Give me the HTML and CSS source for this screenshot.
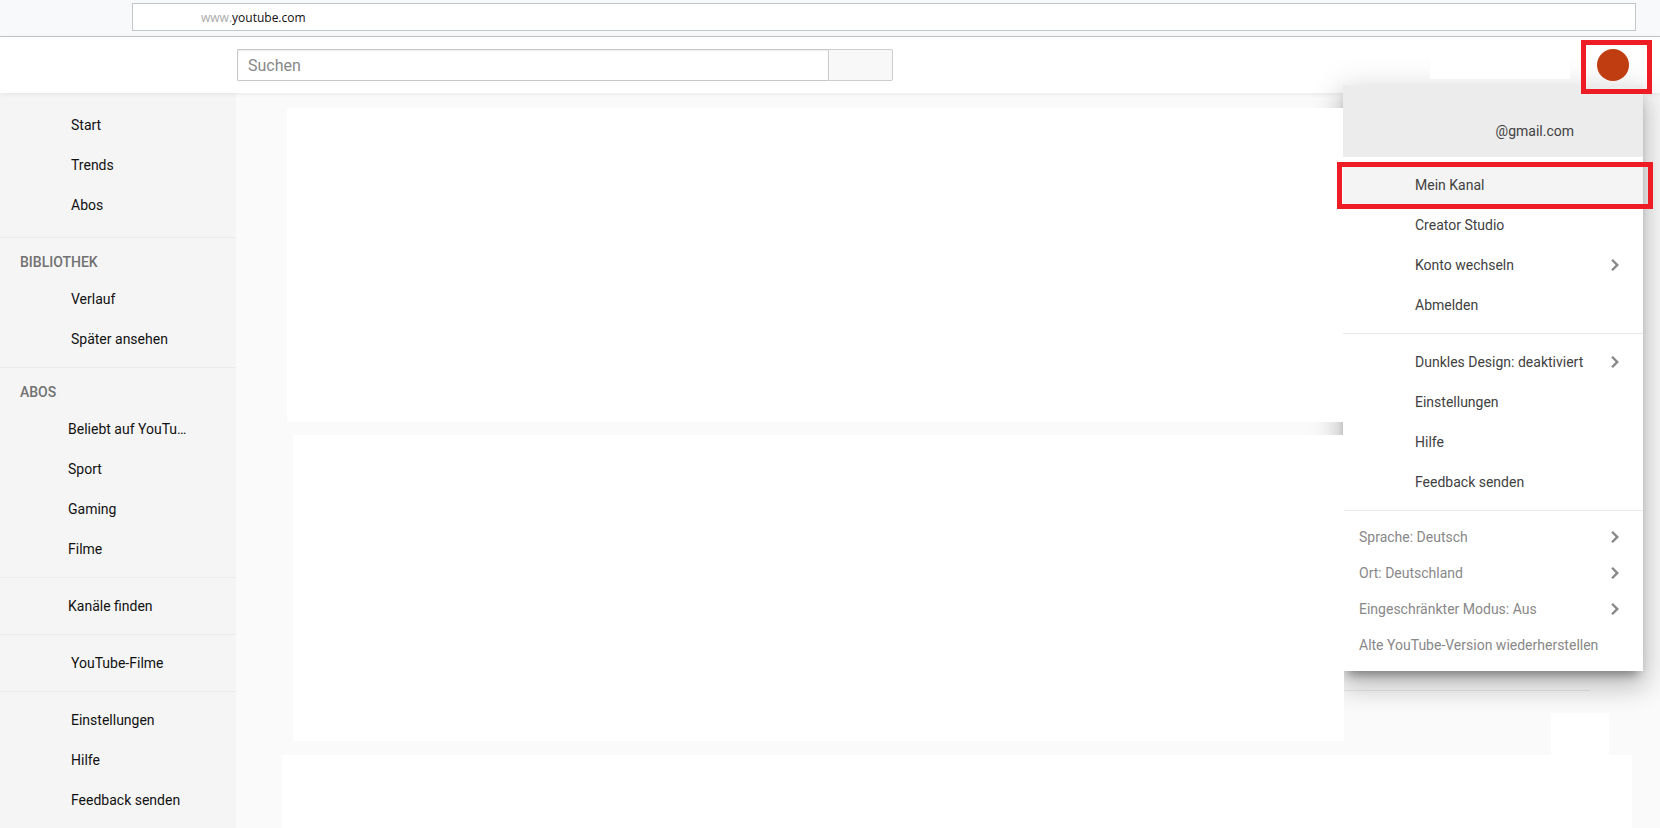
FILE: index.html
```html
<!DOCTYPE html>
<html lang="de">
<head>
  <meta charset="UTF-8">
  <meta name="viewport" content="width=device-width, initial-scale=1.0">
  <title>YouTube</title>
  <link rel="stylesheet" href="styles.css">
</head>
<body>

<div class="browser-bar">
  <div class="address">
    <label for="url">www.</label>
    <input type="text" id="url" value="youtube.com">
  </div>
</div>

<header class="header">
  <form class="search">
    <input type="text" placeholder="Suchen" aria-label="Suchen">
    <button type="button" aria-label="Suchen"></button>
  </form>
  <div class="header-blank"></div>
  <button class="avatar" aria-label="Konto"></button>

  <div class="menu">
    <div class="menu-head">@gmail.com</div>
    <div class="menu-group">
      <a href="#" class="active">Mein Kanal</a>
      <a href="#">Creator Studio</a>
      <a href="#">Konto wechseln
        <svg width="24" height="24" viewBox="0 0 24 24"><path d="M8.2 16.4 12.6 12 8.2 7.6 9.9 5.9 16 12l-6.1 6.1z"/></svg>
      </a>
      <a href="#">Abmelden</a>
    </div>
    <div class="menu-group">
      <a href="#">Dunkles Design: deaktiviert
        <svg width="24" height="24" viewBox="0 0 24 24"><path d="M8.2 16.4 12.6 12 8.2 7.6 9.9 5.9 16 12l-6.1 6.1z"/></svg>
      </a>
      <a href="#">Einstellungen</a>
      <a href="#">Hilfe</a>
      <a href="#">Feedback senden</a>
    </div>
    <div class="menu-group small">
      <a href="#">Sprache: Deutsch
        <svg width="24" height="24" viewBox="0 0 24 24"><path d="M8.2 16.4 12.6 12 8.2 7.6 9.9 5.9 16 12l-6.1 6.1z"/></svg>
      </a>
      <a href="#">Ort: Deutschland
        <svg width="24" height="24" viewBox="0 0 24 24"><path d="M8.2 16.4 12.6 12 8.2 7.6 9.9 5.9 16 12l-6.1 6.1z"/></svg>
      </a>
      <a href="#">Eingeschränkter Modus: Aus
        <svg width="24" height="24" viewBox="0 0 24 24"><path d="M8.2 16.4 12.6 12 8.2 7.6 9.9 5.9 16 12l-6.1 6.1z"/></svg>
      </a>
      <a href="#">Alte YouTube-Version wiederherstellen</a>
    </div>
  </div>
</header>

<div class="page">
  <nav class="sidebar">
    <div class="section first">
      <a href="#">Start</a>
      <a href="#">Trends</a>
      <a href="#">Abos</a>
    </div>
    <div class="section">
      <h3>BIBLIOTHEK</h3>
      <a href="#">Verlauf</a>
      <a href="#">Später ansehen</a>
    </div>
    <div class="section channels">
      <h3>ABOS</h3>
      <a href="#">Beliebt auf YouTube</a>
      <a href="#">Sport</a>
      <a href="#">Gaming</a>
      <a href="#">Filme</a>
    </div>
    <div class="section channels">
      <a href="#">Kanäle finden</a>
    </div>
    <div class="section">
      <a href="#">YouTube-Filme</a>
    </div>
    <div class="section">
      <a href="#">Einstellungen</a>
      <a href="#">Hilfe</a>
      <a href="#">Feedback senden</a>
    </div>
  </nav>

  <main class="content">
    <div class="panel panel-top"></div>
    <div class="row">
      <div class="panel"></div>
      <div class="line"></div>
    </div>
    <div class="panel panel-bottom"></div>
  </main>
</div>

</body>
</html>
```
FILE: styles.css
```css
* {
  box-sizing: border-box;
}

body {
  margin: 0;
  min-height: 100vh;
  display: flex;
  flex-direction: column;
  background-color: #fafafa;
  font-family: Roboto, sans-serif;
  font-size: 14px;
  color: #111;
  overflow-x: hidden;
}

a {
  color: inherit;
  text-decoration: none;
}

/* browser bar */
.browser-bar {
  height: 37px;
  padding: 3px 24px 0 132px;
  background-color: #f7f9fb;
  border-bottom: 1px solid #c2c6c9;
}

.address {
  display: flex;
  align-items: center;
  height: 28px;
  padding-left: 68px;
  background-color: #fff;
  border: 1px solid #c2c8ca;
  font-family: "Open Sans", sans-serif;
  font-size: 12px;
}

.address label {
  color: #aaa;
}

.address input {
  flex: 1;
  padding: 0;
  border: none;
  outline: none;
  font: inherit;
  color: #111;
}

/* header */
.header {
  position: relative;
  display: flex;
  align-items: flex-start;
  height: 56px;
  padding: 0 31px 0 237px;
  background-color: #fff;
  box-shadow: 0 1px 5px rgba(0, 0, 0, 0.08);
}

.search {
  display: flex;
  flex: 0 1 656px;
  height: 32px;
  margin-top: 12px;
}

.search input {
  flex: 1;
  min-width: 0;
  padding: 0 10px;
  border: 1px solid #c6c6c6;
  border-right: none;
  border-radius: 2px 0 0 2px;
  box-shadow: inset 0 1px 2px #eee;
  font-family: inherit;
  font-size: 16px;
  outline: none;
}

.search input::placeholder {
  color: #888;
}

.search button {
  width: 65px;
  border: 1px solid #ccc;
  border-radius: 0 2px 2px 0;
  background-color: #f8f8f8;
}

/* keeps the menu shadow off the icon area */
.header-blank {
  position: relative;
  z-index: 1;
  width: 140px;
  height: 42px;
  margin: 0 27px 0 auto;
  background-color: #fff;
}

.avatar {
  position: relative;
  z-index: 3;
  width: 32px;
  height: 32px;
  margin-top: 12px;
  padding: 0;
  border: none;
  border-radius: 50%;
  background-color: #bf3d11;
}

.avatar::after {
  content: "";
  position: absolute;
  inset: -9px -23px -13px -16px;
  border: 5px solid #ee1c25;
}

/* account menu */
.menu {
  position: absolute;
  top: 48px;
  right: 17px;
  width: 300px;
  background-color: #fff;
  color: #414141;
  box-shadow: 0 16px 24px 2px rgba(0, 0, 0, 0.14),
              0 6px 30px 5px rgba(0, 0, 0, 0.12),
              0 8px 10px -5px rgba(0, 0, 0, 0.4);
}

.menu-head {
  height: 72px;
  padding: 36px 69px 0 0;
  background-color: #ececec;
  line-height: 20px;
  text-align: right;
}

.menu-group {
  padding: 8px 0;
}

.menu-group + .menu-group {
  border-top: 1px solid #e8e8e8;
}

.menu-group a {
  position: relative;
  display: flex;
  align-items: center;
  justify-content: space-between;
  height: 40px;
  padding: 0 16px 0 72px;
}

.menu-group svg {
  fill: #888;
}

.menu-group .active {
  background-color: #f4f4f4;
}

.menu-group .active::after {
  content: "";
  position: absolute;
  z-index: 3;
  inset: -3px -10px -4px -6px;
  border: 5px solid #ee1c25;
}

.menu-group.small a {
  height: 36px;
  padding-left: 16px;
  color: #888;
}

/* page */
.page {
  display: flex;
  flex: 1;
}

.sidebar {
  flex: 0 0 236px;
  min-width: 0;
  background-color: #f5f5f5;
}

.section {
  padding: 8px 0;
  border-top: 1px solid #ebebeb;
}

.section.first {
  padding: 12px 0;
  border-top: none;
}

.section h3 {
  margin: 0;
  padding-left: 20px;
  font-size: 14px;
  font-weight: 500;
  line-height: 33px;
  color: #717171;
}

.section a {
  display: block;
  padding: 0 48px 0 71px;
  line-height: 40px;
  white-space: nowrap;
  overflow: hidden;
  text-overflow: ellipsis;
}

.channels a {
  padding-left: 68px;
}

.content {
  display: flex;
  flex: 1;
  flex-direction: column;
  padding-top: 15px;
}

.panel {
  position: relative;
  z-index: 2;
  background-color: #fff;
}

.panel-top {
  height: 314px;
  margin: 0 317px 0 51px;
}

.row {
  display: flex;
  height: 306px;
  margin: 13px 70px 14px 57px;
}

.row .panel {
  flex: 1;
}

.line {
  width: 246px;
  height: 1px;
  margin-top: 255px;
  background-color: #e8e8e8;
}

.panel-bottom {
  flex: 1;
  margin: 0 28px 0 46px;
}

.panel-bottom::before {
  content: "";
  position: absolute;
  right: 23px;
  bottom: 100%;
  width: 58px;
  height: 42px;
  background-color: #fff;
}
```
